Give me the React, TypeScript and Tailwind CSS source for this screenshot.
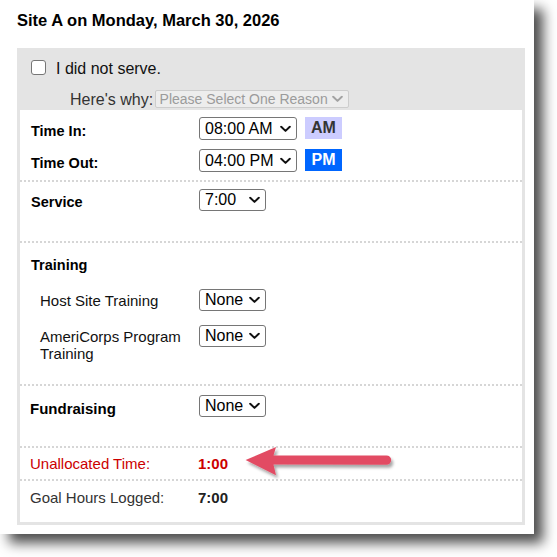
import React from "react";

const font = "font-['Liberation_Sans',Arial,sans-serif]";

function Chevron({ color = "#111" }: { color?: string }) {
  return (
    <svg
      width="11"
      height="7"
      viewBox="0 0 11 7"
      className="pointer-events-none absolute right-[6px] top-1/2 -translate-y-1/2"
    >
      <path d="M1.2 1.2 L5.5 5.4 L9.8 1.2" fill="none" stroke={color} strokeWidth="2" strokeLinecap="round" strokeLinejoin="round" />
    </svg>
  );
}

function Dropdown({ value, options, className }: { value: string; options: string[]; className: string }) {
  return (
    <div className={"relative shrink-0 " + className}>
      <select
        defaultValue={value}
        className="block h-full w-full appearance-none rounded-[3px] border border-[#767676] bg-white py-0 pl-[5px] pr-[20px] text-[16px] leading-[18px] text-black outline-none"
      >
        {options.map((o) => (
          <option key={o}>{o}</option>
        ))}
      </select>
      <Chevron />
    </div>
  );
}

function Divider() {
  return <div className="h-0 w-full border-t-2 border-dotted border-[#d6d6d6]" />;
}

export default function App() {
  return (
    <div className={"h-[557px] w-[557px] overflow-hidden bg-white " + font}>
      <div className="h-[534px] w-[534px] bg-white pl-[17px] pt-[10.5px] shadow-[9px_9px_12px_rgba(0,0,0,0.7)]">
        <h1 className="text-[16.5px] font-bold leading-[19px] text-black">Site A on Monday, March 30, 2026</h1>

        <div className="mt-[18.5px] flex h-[477px] w-[508px] flex-col bg-[#e4e4e4] px-[3px] pb-[3px]">
          {/* not served */}
          <div className="h-[62px] shrink-0 pt-[11.5px]">
            <label className="flex items-start pl-[11px]">
              <input
                type="checkbox"
                className="h-[15px] w-[15px] shrink-0 appearance-none rounded-[3px] border-[1.5px] border-[#767676] bg-white"
              />
              <span className="ml-[10px] text-[16px] leading-[18px] text-[#111]">I did not serve.</span>
            </label>
            <div className="mt-[12.5px] flex items-start pl-[50px]">
              <span className="pt-[1px] text-[16px] leading-[18px] text-[#333]">Here's why:</span>
              <div className="relative ml-[1.5px] h-[18px] w-[194px]">
                <select
                  disabled
                  defaultValue=""
                  className="block h-full w-full appearance-none rounded-[2px] border border-[#cdcdcd] bg-[#ededed] py-0 pl-[4px] text-[14px] leading-[16px] text-[#9b9b9b]"
                >
                  <option value="">Please Select One Reason</option>
                </select>
                <Chevron color="#a3a3a3" />
              </div>
            </div>
          </div>

          {/* form rows */}
          <div className="flex flex-1 flex-col bg-white">
            <div className="shrink-0 pb-[8px] pt-[7px]">
              <div className="flex items-start">
                <div className="w-[179px] shrink-0 pl-[11px] pt-[5.5px] text-[14.5px] font-bold leading-[17px] text-black">Time In:</div>
                <Dropdown value="08:00 AM" options={["07:00 AM", "08:00 AM", "09:00 AM"]} className="h-[23px] w-[98px]" />
                <div className="ml-[8px] flex h-[22px] w-[37px] items-center justify-center bg-[#ccccff] text-[16px] font-bold leading-[18px] text-[#333]">AM</div>
              </div>
              <div className="mt-[9px] flex items-start">
                <div className="w-[179px] shrink-0 pl-[11px] pt-[5.5px] text-[14.5px] font-bold leading-[17px] text-black">Time Out:</div>
                <Dropdown value="04:00 PM" options={["03:00 PM", "04:00 PM", "05:00 PM"]} className="h-[23px] w-[98px]" />
                <div className="ml-[8px] flex h-[22px] w-[37px] items-center justify-center bg-[#0066ff] text-[16px] font-bold leading-[18px] text-white">PM</div>
              </div>
            </div>
            <Divider />

            <div className="h-[58.5px] shrink-0 pt-[7px]">
              <div className="flex items-start">
                <div className="w-[179px] shrink-0 pl-[11px] pt-[5px] text-[14.5px] font-bold leading-[17px] text-black">Service</div>
                <Dropdown value="7:00" options={["None", "7:00", "8:00"]} className="h-[22px] w-[67px]" />
              </div>
            </div>
            <Divider />

            <div className="h-[141px] shrink-0 pt-[14px]">
              <div className="pl-[11px] text-[14.5px] font-bold leading-[17px] text-black">Training</div>
              <div className="mt-[15px] flex items-start">
                <div className="w-[179px] shrink-0 pl-[20px] pt-[3.5px] text-[15px] leading-[17px] text-[#111]">Host Site Training</div>
                <Dropdown value="None" options={["None", "1:00", "2:00"]} className="h-[22px] w-[67px]" />
              </div>
              <div className="mt-[14px] flex items-start">
                <div className="w-[179px] shrink-0 pl-[20px] pr-[10px] pt-[3.5px] text-[15px] leading-[17px] text-[#111]">AmeriCorps Program Training</div>
                <Dropdown value="None" options={["None", "1:00", "2:00"]} className="h-[22px] w-[67px]" />
              </div>
            </div>
            <Divider />

            <div className="h-[60px] shrink-0 pt-[9px]">
              <div className="flex items-start">
                <div className="w-[179px] shrink-0 pl-[10px] pt-[5px] text-[15px] font-bold leading-[17px] text-black">Fundraising</div>
                <Dropdown value="None" options={["None", "1:00", "2:00"]} className="h-[22px] w-[67px]" />
              </div>
            </div>
            <Divider />

            <div className="relative h-[31.5px] shrink-0 pt-[7.5px]">
              <div className="flex text-[15px] leading-[17px] text-[#cc0000]">
                <div className="w-[178px] shrink-0 pl-[10px]">Unallocated Time:</div>
                <div className="font-bold">1:00</div>
              </div>
              <svg
                width="170"
                height="44"
                viewBox="0 0 170 44"
                className="absolute left-[220px] top-[-5.5px] overflow-visible"
              >
                <defs>
                  <filter id="arrowShadow" x="-10%" y="-40%" width="130%" height="200%">
                    <feDropShadow dx="2" dy="3" stdDeviation="1.8" floodColor="#000" floodOpacity="0.35" />
                  </filter>
                </defs>
                <path
                  d="M5.6 18 L36 5 L33.5 13.6 L146.5 13.4 A4.7 4.7 0 0 1 146.5 22.8 L33.5 22.6 L36 33.3 Z"
                  fill="#e24c64"
                  filter="url(#arrowShadow)"
                />
              </svg>
            </div>
            <Divider />

            <div className="flex-1 pt-[7.5px]">
              <div className="flex text-[15px] leading-[17px] text-[#333]">
                <div className="w-[178px] shrink-0 pl-[10px]">Goal Hours Logged:</div>
                <div className="font-bold text-[#222]">7:00</div>
              </div>
            </div>
          </div>
        </div>
      </div>
    </div>
  );
}
